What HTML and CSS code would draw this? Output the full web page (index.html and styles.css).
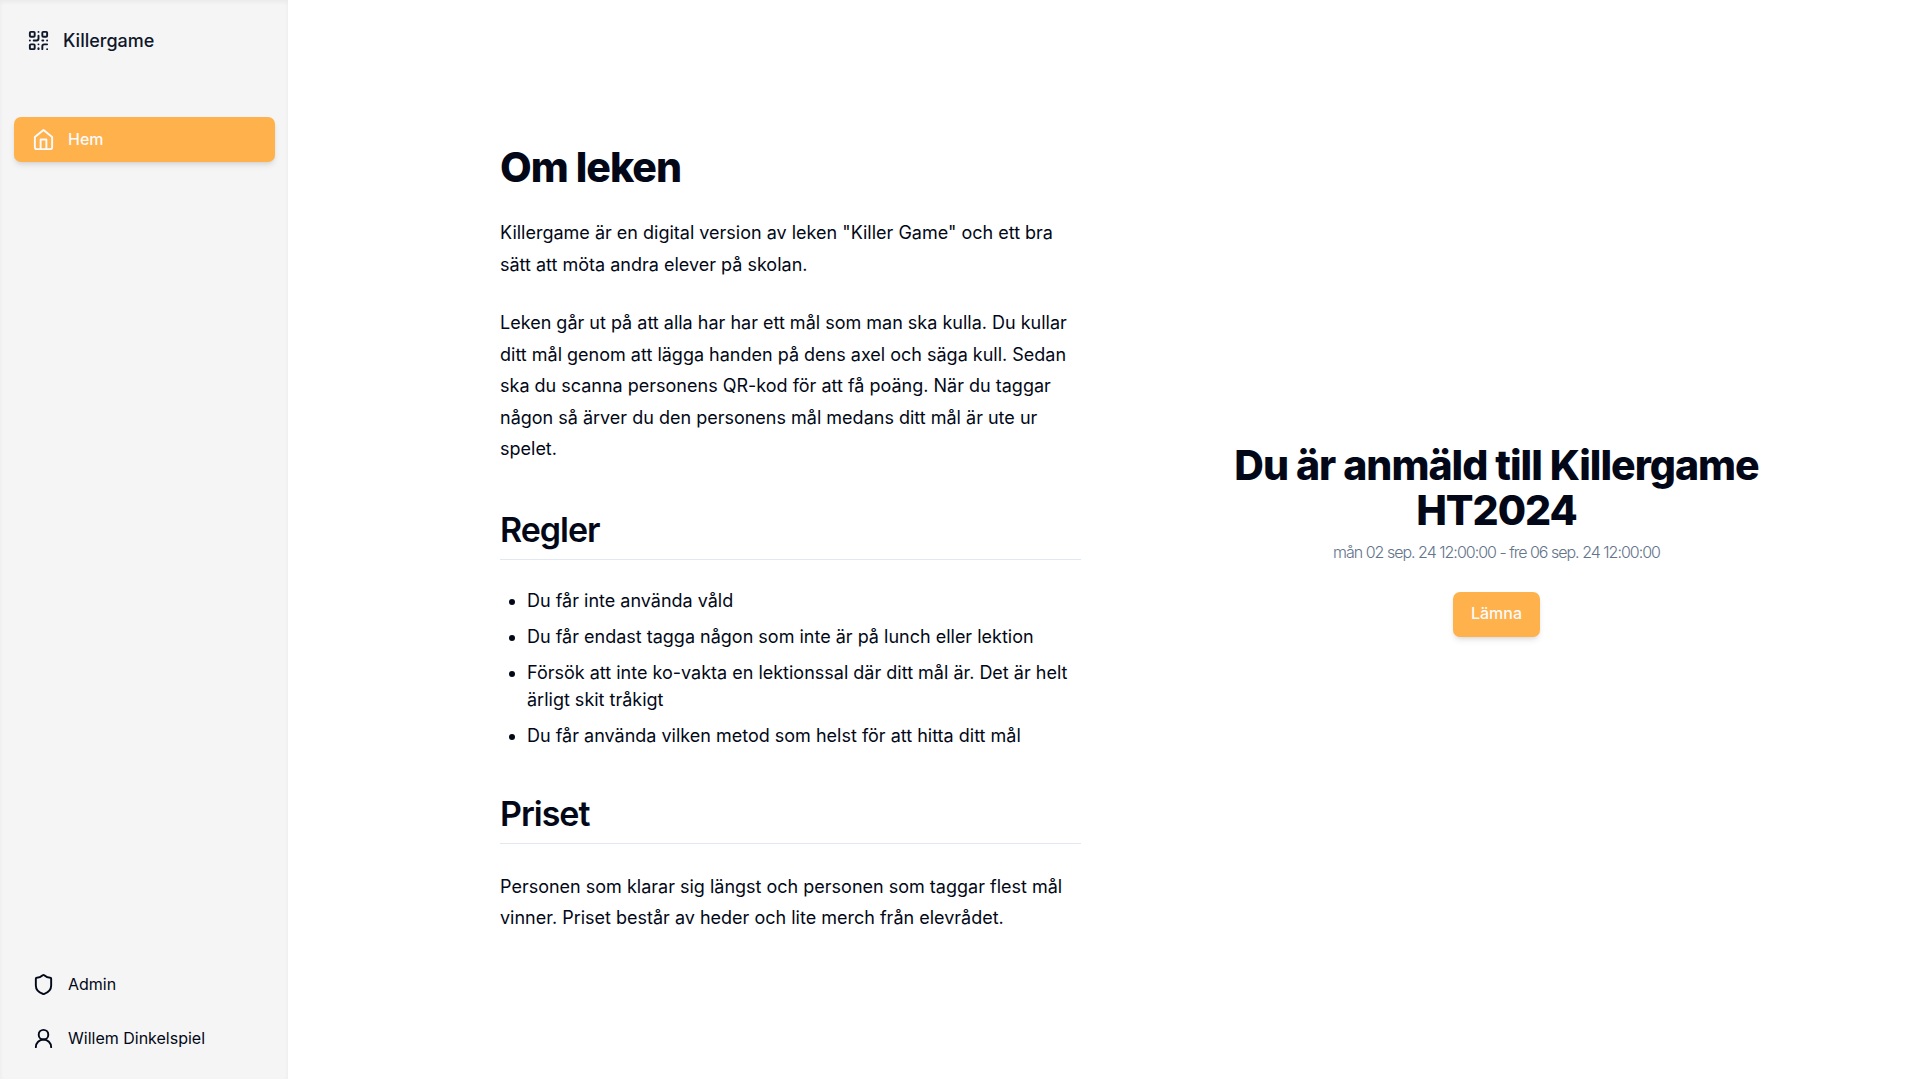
FILE: index.html
```html
<!DOCTYPE html>
<html lang="sv">
<head>
<meta charset="utf-8">
<meta name="viewport" content="width=device-width, initial-scale=1">
<title>Killergame</title>
<link rel="stylesheet" href="styles.css">
</head>
<body>
<div class="layout">
  <aside class="sidebar">
    <a class="brand" href="#">
      <svg class="icon" viewBox="0 0 24 24" aria-hidden="true"><rect width="5" height="5" x="3" y="3" rx="1"/><rect width="5" height="5" x="16" y="3" rx="1"/><rect width="5" height="5" x="3" y="16" rx="1"/><path d="M21 16h-3a2 2 0 0 0-2 2v3"/><path d="M21 21v.01"/><path d="M12 7v3a2 2 0 0 1-2 2H7"/><path d="M3 12h.01"/><path d="M12 3h.01"/><path d="M12 16v.01"/><path d="M16 12h1"/><path d="M21 12v.01"/><path d="M12 21v-1"/></svg>
      <span>Killergame</span>
    </a>
    <nav class="nav">
      <a class="nav-link active" href="#" aria-current="page">
        <svg class="icon" viewBox="0 0 24 24" aria-hidden="true"><path d="M3 9.500l9-7.500 9 7.500V20a2 2 0 0 1-2 2H5a2 2 0 0 1-2-2z"/><path d="M9 22V12h6v10"/></svg>
        <span>Hem</span>
      </a>
    </nav>
    <nav class="nav nav-bottom">
      <a class="nav-link" href="#">
        <svg class="icon" viewBox="0 0 24 24" aria-hidden="true"><path d="M20 13c0 5-3.500 7.500-7.660 8.950a1 1 0 0 1-.67-.01C7.500 20.500 4 18 4 13V6a1 1 0 0 1 1-1c2 0 4.500-1.200 6.240-2.720a1.170 1.170 0 0 1 1.520 0C14.510 3.810 17 5 19 5a1 1 0 0 1 1 1z"/></svg>
        <span>Admin</span>
      </a>
      <a class="nav-link" href="#">
        <svg class="icon" viewBox="0 0 24 24" aria-hidden="true"><circle cx="12" cy="8" r="5"/><path d="M20 21a8 8 0 0 0-16 0"/></svg>
        <span>Willem Dinkelspiel</span>
      </a>
    </nav>
  </aside>
  <main class="main">
    <article class="about">
      <h1>Om leken</h1>
      <p>Killergame är en digital version av leken "Killer Game" och ett bra sätt att möta andra elever på skolan.</p>
      <p>Leken går ut på att alla har har ett mål som man ska kulla. Du kullar ditt mål genom att lägga handen på dens axel och säga kull. Sedan ska du scanna personens QR-kod för att få poäng. När du taggar någon så ärver du den personens mål medans ditt mål är ute ur spelet.</p>
      <h2>Regler</h2>
      <ul>
        <li>Du får inte använda våld</li>
        <li>Du får endast tagga någon som inte är på lunch eller lektion</li>
        <li>Försök att inte ko-vakta en lektionssal där ditt mål är. Det är helt ärligt skit tråkigt</li>
        <li>Du får använda vilken metod som helst för att hitta ditt mål</li>
      </ul>
      <h2>Priset</h2>
      <p>Personen som klarar sig längst och personen som taggar flest mål vinner. Priset består av heder och lite merch från elevrådet.</p>
    </article>
    <section class="signup">
      <h1>Du är anmäld till Killergame HT2024</h1>
      <p class="dates">mån 02 sep. 24 12:00:00 - fre 06 sep. 24 12:00:00</p>
      <button class="button" type="button">Lämna</button>
    </section>
  </main>
</div>
</body>
</html>
```
FILE: styles.css
```css
* { box-sizing: border-box; margin: 0; padding: 0; }

body {
  font-family: Inter, "Liberation Sans", sans-serif;
  font-size: 18px;
  line-height: 27px;
  color: #020817;
  background: #fff;
}

a { color: inherit; text-decoration: none; }

.layout { display: flex; min-height: 100vh; }

/* Sidebar */
.sidebar {
  flex: 0 0 288px;
  display: flex;
  flex-direction: column;
  padding: 27px 13px 18px 14px;
  background: #f5f5f5;
  box-shadow: inset 0 2px 4px rgb(0 0 0 / 5%);
}

.icon {
  flex: none;
  width: 23px;
  height: 23px;
  fill: none;
  stroke: currentColor;
  stroke-width: 2;
  stroke-linecap: round;
  stroke-linejoin: round;
}

.brand {
  display: flex;
  align-items: center;
  gap: 13px;
  padding: 0 13px;
  font-weight: 500;
  color: #0f172a;
}

.nav { display: flex; flex-direction: column; gap: 9px; margin-top: 63px; }
.nav-bottom { margin-top: auto; }

.nav-link {
  display: flex;
  align-items: center;
  gap: 13px;
  height: 45px;
  padding: 0 18px;
  border-radius: 7px;
  font-size: 16px;
  line-height: 22px;
}

.nav-link span { padding-bottom: 2px; }

.active, .button {
  color: #f8fafc;
  background: #ffb14b;
  font-weight: 500;
  box-shadow: 0 4px 6px -1px rgb(0 0 0 / 10%), 0 2px 4px -2px rgb(0 0 0 / 10%);
}

/* Content */
.main {
  flex: 1;
  display: grid;
  grid-template-columns: 1fr 1fr;
  gap: 125px;
  align-items: center;
  padding: 45px 132px 45px 212px;
}

h1 { font-size: 41px; line-height: 45px; font-weight: 800; letter-spacing: -1px; }

h2 {
  margin-top: 45px;
  padding-bottom: 9px;
  border-bottom: 1px solid #e2e8f0;
  font-size: 34px;
  line-height: 40px;
  font-weight: 600;
  letter-spacing: -1px;
}

.about p { margin-top: 27px; line-height: 1.75; }
.about ul { margin: 27px 0 0 27px; }
.about li + li { margin-top: 9px; }

.signup { display: flex; flex-direction: column; align-items: center; text-align: center; }

.dates {
  margin-top: 8px;
  font-size: 16px;
  line-height: 22px;
  font-weight: 300;
  letter-spacing: -1px;
  color: #64748b;
}

.button {
  height: 45px;
  margin-top: 29px;
  padding: 0 18px 2px;
  border: 0;
  border-radius: 7px;
  font-family: inherit;
  font-size: 16px;
  line-height: 22px;
}
```
